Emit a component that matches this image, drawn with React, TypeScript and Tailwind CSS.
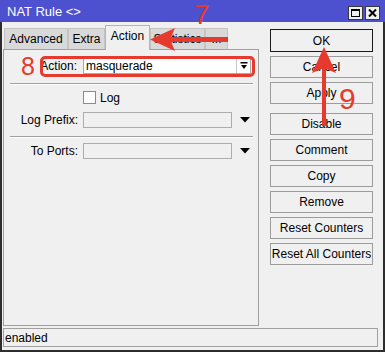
import React from 'react';

const tabs = [
  { label: 'Advanced', w: 64 },
  { label: 'Extra', w: 37 },
  { label: 'Action', w: 45, active: true },
  { label: 'Statistics', w: 55 },
  { label: '...', w: 23 },
];

const buttons = ['OK', 'Cancel', 'Apply', 'Disable', 'Comment', 'Copy', 'Remove', 'Reset Counters', 'Reset All Counters'];

const DownTriangle: React.FC = () => (
  <svg width="10" height="6" viewBox="0 0 10 6" className="ml-[8px]">
    <polygon points="0,0 10,0 5,5.5" fill="#000" />
  </svg>
);

const App: React.FC = () => {
  return (
    <div className="relative w-[385px] h-[352px] flex flex-col bg-[#f0f0f0] font-['Liberation_Sans',Arial,sans-serif] text-[12px] text-black overflow-hidden">
      {/* Title bar */}
      <div className="h-[22px] shrink-0 bg-[#4d50cf] flex items-center pl-[7px] pr-[5px]">
        <span className="text-white text-[13px] leading-none">NAT Rule &lt;&gt;</span>
        <div className="ml-auto flex gap-[2px] mt-[4px]">
          <div className="w-[15px] h-[14px] bg-[#efefef] border border-[#3a3a3a] flex items-center justify-center">
            <div className="w-[9px] h-[8px] border border-black border-t-2" />
          </div>
          <div className="w-[15px] h-[14px] bg-[#efefef] border border-[#3a3a3a] flex items-center justify-center">
            <svg width="9" height="8" viewBox="0 0 9 8">
              <path d="M1 0.5 L8 7.5 M8 0.5 L1 7.5" stroke="#000" strokeWidth="2" />
            </svg>
          </div>
        </div>
      </div>

      {/* Body */}
      <div className="flex-1 flex flex-col border-x-2 border-b-2 border-[#2d2d2d]">
        <div className="flex pt-[3px]">
          {/* Left: tabs + panel */}
          <div className="ml-[1px] w-[256px] flex flex-col">
            <div className="h-[25px] flex items-end pl-[1px]">
              {tabs.map((t) =>
                t.active ? (
                  <div
                    key={t.label}
                    style={{ width: t.w }}
                    className="relative z-10 h-[25px] bg-[#f0f0f0] border border-b-0 border-[#b4b4b4] flex items-center justify-center pb-[4px]"
                  >
                    {t.label}
                  </div>
                ) : (
                  <div
                    key={t.label}
                    style={{ width: t.w }}
                    className="h-[22px] bg-[#d9d9d9] border border-[#c4c4c4] flex items-center justify-center"
                  >
                    {t.label}
                  </div>
                )
              )}
            </div>
            <div className="-mt-px h-[277px] border border-[#a0a0a0] bg-[#f0f0f0] flex flex-col pt-[8px]">
              {/* Action row */}
              <div className="flex items-center h-[16px]">
                <div className="w-[76px] text-right pr-[3px]">Action:</div>
                <div className="ml-[3px] w-[168px] h-[16px] bg-white border border-[#a9a9a9] flex items-center">
                  <span className="pl-[2px] flex-1">masquerade</span>
                  <div className="w-[14px] h-full border-l border-[#c8c8c8] flex items-center justify-center">
                    <svg width="8" height="8" viewBox="0 0 8 8">
                      <rect x="0.5" y="0" width="7" height="1.5" fill="#000" />
                      <polygon points="1,3 7,3 4,7" fill="#000" />
                    </svg>
                  </div>
                </div>
              </div>

              <div className="mt-[9px] ml-[6px] w-[243px] h-px bg-[#a0a0a0] shadow-[0_1px_0_#fff]" />

              {/* Log checkbox */}
              <div className="mt-[7px] flex items-center h-[13px]">
                <div className="ml-[79px] w-[13px] h-[13px] bg-white border border-[#8a8a8a]" />
                <span className="ml-[4px]">Log</span>
              </div>

              {/* Log prefix */}
              <div className="mt-[8px] flex items-center h-[16px]">
                <div className="w-[76px] text-right pr-[2px]">Log Prefix:</div>
                <div className="ml-[3px] w-[149px] h-[16px] border border-[#adadad] bg-[#f0f0f0]" />
                <DownTriangle />
              </div>

              <div className="mt-[8px] ml-[6px] w-[243px] h-px bg-[#a0a0a0] shadow-[0_1px_0_#fff]" />

              {/* To ports */}
              <div className="mt-[6px] flex items-center h-[16px]">
                <div className="w-[76px] text-right pr-[2px]">To Ports:</div>
                <div className="ml-[3px] w-[149px] h-[16px] border border-[#adadad] bg-[#f0f0f0]" />
                <DownTriangle />
              </div>
            </div>
          </div>

          {/* Right: buttons */}
          <div className="ml-[11px] w-[103px] pt-[4px] flex flex-col gap-[4px]">
            {buttons.map((b, i) => (
              <div
                key={b}
                className={
                  'h-[22px] bg-[#f0f0f0] flex items-center justify-center border ' +
                  (i === 0 ? 'border-[#1a1a1a] h-[23px]' : 'border-[#9c9c9c]') +
                  (i === 3 ? ' mt-[5px]' : '')
                }
              >
                {b}
              </div>
            ))}
          </div>
        </div>

        {/* Status bar */}
        <div className="mt-[2px] ml-[1px] w-[375px] h-[19px] border border-[#a0a0a0] flex items-center pl-[1px]">
          enabled
        </div>
      </div>

      {/* Annotations */}
      <div className="absolute left-[40px] top-[56px] w-[215px] h-[21px] border-[3px] border-[#e63a2e] rounded-[5px] pointer-events-none" />
      <span className="absolute left-[194px] top-[1px] text-[28px] leading-none text-[#e63a2e]">7</span>
      <span className="absolute left-[21px] top-[54px] text-[25px] leading-none text-[#e63a2e]">8</span>
      <span className="absolute left-[339px] top-[84px] text-[30px] leading-none text-[#e63a2e]">9</span>
      <svg className="absolute left-0 top-0 pointer-events-none" width="385" height="352" viewBox="0 0 385 352">
        <line x1="168" y1="39.5" x2="228" y2="39.5" stroke="#e63a2e" strokeWidth="5" />
        <polygon points="150,39.5 175,28 170,39.5 175,51" fill="#e63a2e" />
        <line x1="324" y1="68" x2="324" y2="126" stroke="#e63a2e" strokeWidth="4" />
        <polygon points="324,47 336,73 324,68 312,73" fill="#e63a2e" />
      </svg>
    </div>
  );
};

export default App;
